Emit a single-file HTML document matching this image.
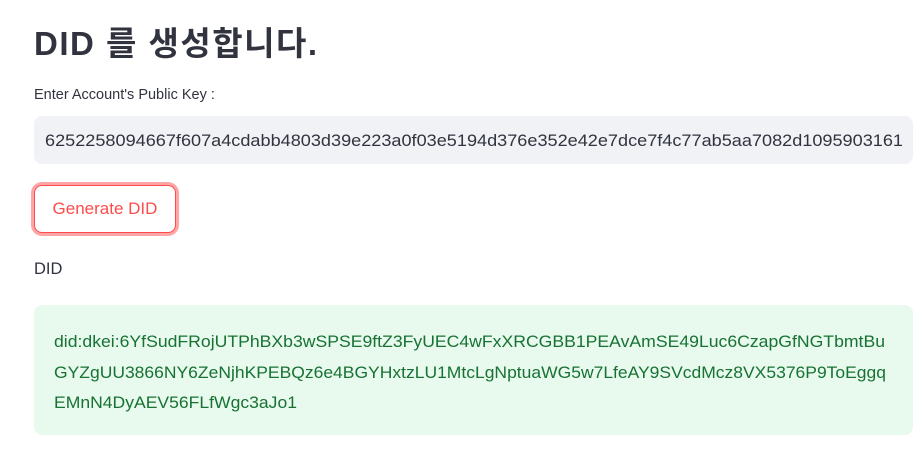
<!DOCTYPE html>
<html><head><meta charset="utf-8"><style>
html,body{margin:0;padding:0;background:#fff;width:924px;height:452px;overflow:hidden;font-family:"Liberation Sans","Noto Sans CJK KR",sans-serif;color:#31333f}
h1{position:absolute;left:34px;top:17px;margin:0;font-size:33px;font-weight:bold;font-family:"Liberation Sans","Noto Sans CJK KR",sans-serif;letter-spacing:1.5px}
.lbl{position:absolute;left:34px;top:87px;font-size:14.5px}
.inp{position:absolute;left:34px;top:116px;width:879px;height:48px;background:#f0f2f6;border-radius:8px}
.btn{position:absolute;left:34px;top:185px;width:140px;height:46px;border:1px solid #ff4b4b;border-radius:8px;box-shadow:0 0 0 3px rgba(255,75,75,0.5);color:#ff4b4b;font-size:17px;text-align:center;line-height:46px;background:#fff}
.did{position:absolute;left:34px;top:260px;font-size:16.5px}
.box{position:absolute;left:34px;top:305px;width:879px;height:130px;background:#e8f9ee;border-radius:8px}
svg{position:absolute;left:0;top:0}
</style></head><body>
<h1>DID 를 생성합니다.</h1>
<div class="lbl">Enter Account's Public Key :</div>
<div class="inp"></div>
<div class="btn">Generate DID</div>
<div class="did">DID</div>
<div class="box"></div>
<svg width="924" height="452" font-family="Liberation Sans, sans-serif" font-size="16.5">
<text x="45" y="146" fill="#31333f" textLength="858" lengthAdjust="spacingAndGlyphs">6252258094667f607a4cdabb4803d39e223a0f03e5194d376e352e42e7dce7f4c77ab5aa7082d1095903161</text>
<g fill="#177233">
<text x="54" y="347" textLength="831" lengthAdjust="spacingAndGlyphs">did:dkei:6YfSudFRojUTPhBXb3wSPSE9ftZ3FyUEC4wFxXRCGBB1PEAvAmSE49Luc6CzapGfNGTbmtBu</text>
<text x="54" y="378" textLength="832" lengthAdjust="spacingAndGlyphs">GYZgUU3866NY6ZeNjhKPEBQz6e4BGYHxtzLU1MtcLgNptuaWG5w7LfeAY9SVcdMcz8VX5376P9ToEggq</text>
<text x="54" y="408" textLength="243" lengthAdjust="spacingAndGlyphs">EMnN4DyAEV56FLfWgc3aJo1</text>
</g>
</svg>
</body></html>
